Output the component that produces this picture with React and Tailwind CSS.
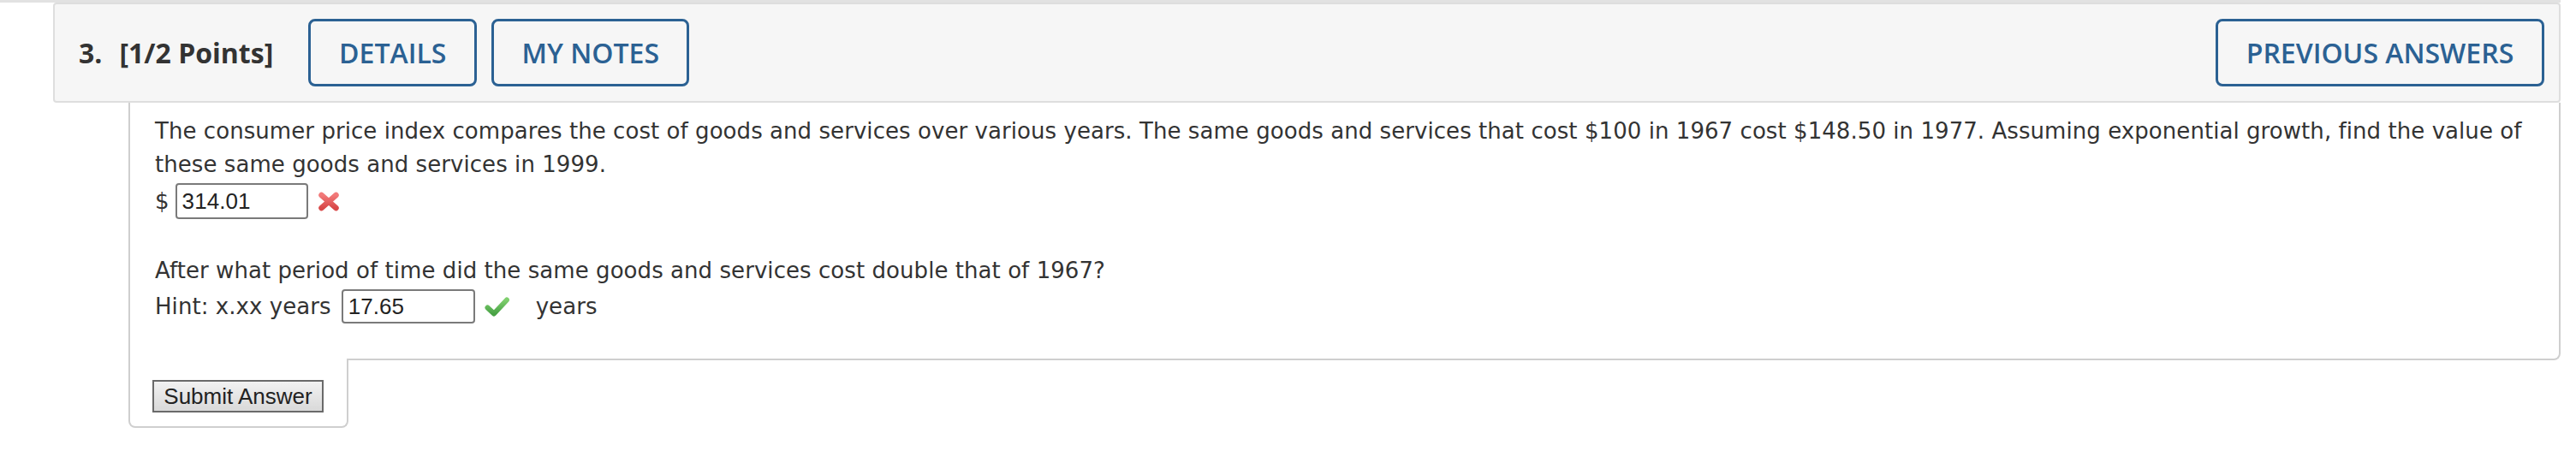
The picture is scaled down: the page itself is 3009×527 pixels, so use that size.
import React from "react";

const body = { fontFamily: '"DejaVu Sans", Verdana, sans-serif' };
const arial = { fontFamily: '"Liberation Sans", Arial, sans-serif' };
const open = { fontFamily: '"Open Sans", "Noto Sans", sans-serif' };

const WrongIcon = () => (
  <svg width="26" height="23" viewBox="0 0 26 23" className="ml-[11px]">
    <defs>
      <linearGradient id="xg" x1="0" y1="0" x2="0" y2="1">
        <stop offset="0" stopColor="#f27a7a" />
        <stop offset="1" stopColor="#d84848" />
      </linearGradient>
    </defs>
    <path d="M4.5 4 L21.5 19 M21.5 4 L4.5 19" stroke="url(#xg)" strokeWidth="6.5" strokeLinecap="round" fill="none" />
  </svg>
);

const CorrectIcon = () => (
  <svg width="29" height="24" viewBox="0 0 29 24" className="ml-[11px]">
    <defs>
      <linearGradient id="cg" x1="0" y1="0" x2="0" y2="1">
        <stop offset="0" stopColor="#7fcf6e" />
        <stop offset="1" stopColor="#48a245" />
      </linearGradient>
    </defs>
    <path d="M3.5 13.5 L11 20.5 L26 4.5" stroke="url(#cg)" strokeWidth="6" strokeLinecap="round" strokeLinejoin="round" fill="none" />
  </svg>
);

const OutlineButton = ({ label, width }) => (
  <button
    className={`${width} h-[79px] flex items-center justify-center border-[3px] border-[#2b6193] rounded-[8px] text-[#2b6193] text-[32px] font-semibold tracking-normal`}
    style={open}
  >
    {label}
  </button>
);

const AnswerBox = ({ value, width, height }) => (
  <div
    className={`${width} ${height} flex items-center pl-[6px] border-2 border-[#7a7a7a] rounded-[4px] text-[26px] text-[#222] bg-white`}
    style={arial}
  >
    {value}
  </div>
);

export default function App() {
  return (
    <div className="w-[3009px] h-[527px] bg-white overflow-hidden">
      <div className="h-[3px] mr-[18px] bg-[#e2e2e2]" />

      {/* question header */}
      <div className="ml-[62px] mr-[18px] h-[117px] flex items-center pl-[28px] pr-[17px] bg-[#f6f6f6] border-2 border-[#dedede] rounded-[4px]">
        <div className="flex items-center text-[32px] font-bold text-[#333]" style={open}>
          <span>3.</span>
          <span className="ml-[20px]">[1/2 Points]</span>
        </div>
        <div className="ml-[41px] flex gap-[17px]">
          <OutlineButton label="DETAILS" width="w-[197px]" />
          <OutlineButton label="MY NOTES" width="w-[231px]" />
        </div>
        <div className="ml-auto">
          <OutlineButton label="PREVIOUS ANSWERS" width="w-[384px]" />
        </div>
      </div>

      {/* question body */}
      <div className="ml-[150px] mr-[18px]">
        <div
          className="border-x-2 border-b-2 border-[#cfcfcf] rounded-br-[8px] pl-[29px] pr-[20px] pt-[14px] pb-[41px] text-[26px] leading-[39px] tracking-[0.06px] text-[#333]"
          style={body}
        >
          <p>
            The consumer price index compares the cost of goods and services over various years. The same goods and
            services that cost $100 in 1967 cost $148.50 in 1977. Assuming exponential growth, find the value of these
            same goods and services in 1999.
          </p>
          <div className="mt-[2px] h-[42px] flex items-center">
            <span>$</span>
            <span className="ml-[7px]">
              <AnswerBox value="314.01" width="w-[155px]" height="h-[42px]" />
            </span>
            <WrongIcon />
          </div>

          <p className="mt-[41px]">After what period of time did the same goods and services cost double that of 1967?</p>
          <div className="mt-[2px] h-[40px] flex items-center">
            <span>Hint: x.xx years</span>
            <span className="ml-[12px]">
              <AnswerBox value="17.65" width="w-[156px]" height="h-[40px]" />
            </span>
            <CorrectIcon />
            <span className="ml-[31px]">years</span>
          </div>
        </div>

        <div className="relative -mt-[2px] w-[257px] h-[81px] bg-white border-x-2 border-b-2 border-[#cfcfcf] rounded-b-[8px] pl-[26px] pt-[25px]">
          <button
            className="w-[200px] h-[38px] flex items-center justify-center border-2 border-[#6a6a6a] bg-gradient-to-b from-[#f2f2f2] to-[#d9d9d9] text-[26px] text-[#222]"
            style={arial}
          >
            Submit Answer
          </button>
        </div>
      </div>
    </div>
  );
}
